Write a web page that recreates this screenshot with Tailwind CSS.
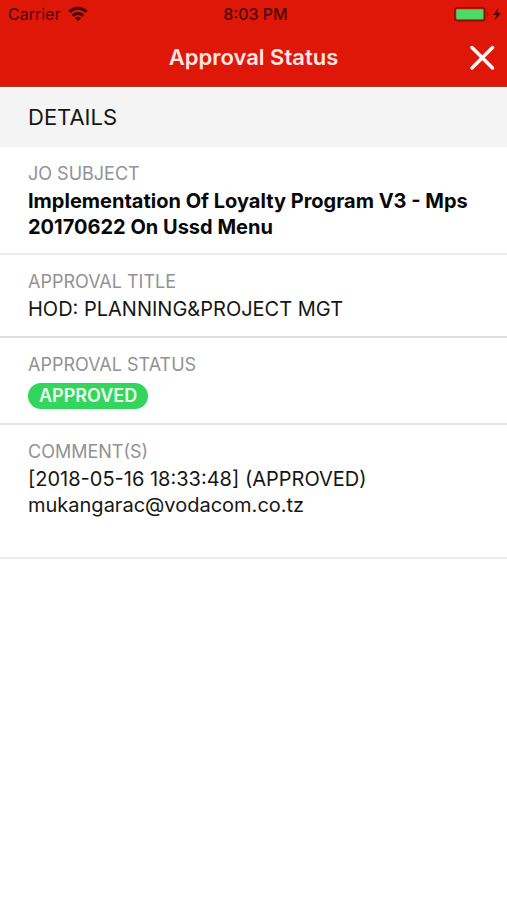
<!DOCTYPE html>
<html lang="en">
<head>
    <meta charset="UTF-8">
    <meta name="viewport" content="width=device-width, initial-scale=1.0">
    <title>Approval Status</title>
    <script src="https://cdn.jsdelivr.net/npm/@tailwindcss/browser@4"></script>
</head>
<body class="bg-white text-[#161616] font-['Inter','Liberation_Sans',sans-serif]">
    <header class="bg-[#df1709] border-b border-[#b03a35]">
        <!-- Status bar -->
        <div class="grid grid-cols-3 items-center h-7 pl-2 pr-1 text-base text-[#4a0502]">
            <div class="flex items-center gap-2">
                <span>Carrier</span>
                <svg class="w-5 h-4" viewBox="0 0 20 16" fill="none" stroke="currentColor" stroke-width="3" aria-hidden="true">
                    <path d="M1.500 5.800a12.200 12.200 0 0 1 17 0"/>
                    <path d="M4.800 9.600a7.600 7.600 0 0 1 10.400 0"/>
                    <path d="M10 15 7 12a4.200 4.200 0 0 1 6 0z" fill="currentColor" stroke="none"/>
                </svg>
            </div>
            <div class="text-center font-medium">8:03 PM</div>
            <svg class="w-12 h-4 mr-px justify-self-end" viewBox="0 0 48 16" aria-hidden="true">
                <rect x="0.800" y="1.800" width="30" height="13" rx="2.500" fill="#df1709" stroke="#8a1008" stroke-width="1.500"/>
                <rect x="2.300" y="3.300" width="27" height="10" rx="1" fill="#4cd964"/>
                <path d="M33 6q2.800 2.300 0 4.600z" fill="#8a1008"/>
                <path d="M44.500 2 39.500 9h3.200L40 14.800 47 7h-3.800z" fill="#3a0402"/>
            </svg>
        </div>

        <!-- Title bar -->
        <div class="grid grid-cols-[40px_1fr_40px] items-center h-[58px] px-1">
            <h1 class="col-start-2 text-center text-[22px] font-semibold text-[#ffe6e3]">Approval Status</h1>
            <button type="button" class="flex items-center justify-center h-10 text-white" aria-label="Close">
                <svg class="w-7 h-7" viewBox="0 0 28 28" fill="none" stroke="currentColor" stroke-width="3.500" stroke-linecap="round" aria-hidden="true">
                    <path d="M3 4.500l20.500 20.500M23.500 4.500l-20.500 20.500"/>
                </svg>
            </button>
        </div>
    </header>

    <main>
        <h2 class="flex items-center h-[60px] px-7 bg-[#f4f4f4] text-[22px]">DETAILS</h2>

        <dl class="text-[20px] leading-[26px]">
            <div class="px-7 pt-3.5 pb-[13px] border-b-2 border-[#ececec]">
                <dt class="text-[18px] text-[#929292]">JO SUBJECT</dt>
                <dd class="mt-px font-bold text-[#080808]">Implementation Of Loyalty Program V3 - Mps 20170622 On Ussd Menu</dd>
            </div>
            <div class="px-7 pt-3.5 pb-3.5 border-b-2 border-[#e0e0e0]">
                <dt class="text-[18px] text-[#929292]">APPROVAL TITLE</dt>
                <dd class="mt-px">HOD: PLANNING&amp;PROJECT MGT</dd>
            </div>
            <div class="px-7 pt-3.5 pb-3.5 border-b-2 border-[#e4e4e4]">
                <dt class="text-[18px] text-[#929292]">APPROVAL STATUS</dt>
                <dd class="flex mt-[5px]">
                    <span class="px-[11px] rounded-full bg-[#32d65c] text-[18px] font-semibold text-[#effff2]">APPROVED</span>
                </dd>
            </div>
            <div class="px-7 pt-3.5 pb-[39px] border-b-2 border-[#ececec]">
                <dt class="text-[18px] text-[#929292]">COMMENT(S)</dt>
                <dd class="mt-px">[2018-05-16 18:33:48] (APPROVED)<br>mukangarac@vodacom.co.tz</dd>
            </div>
        </dl>
    </main>
</body>
</html>
